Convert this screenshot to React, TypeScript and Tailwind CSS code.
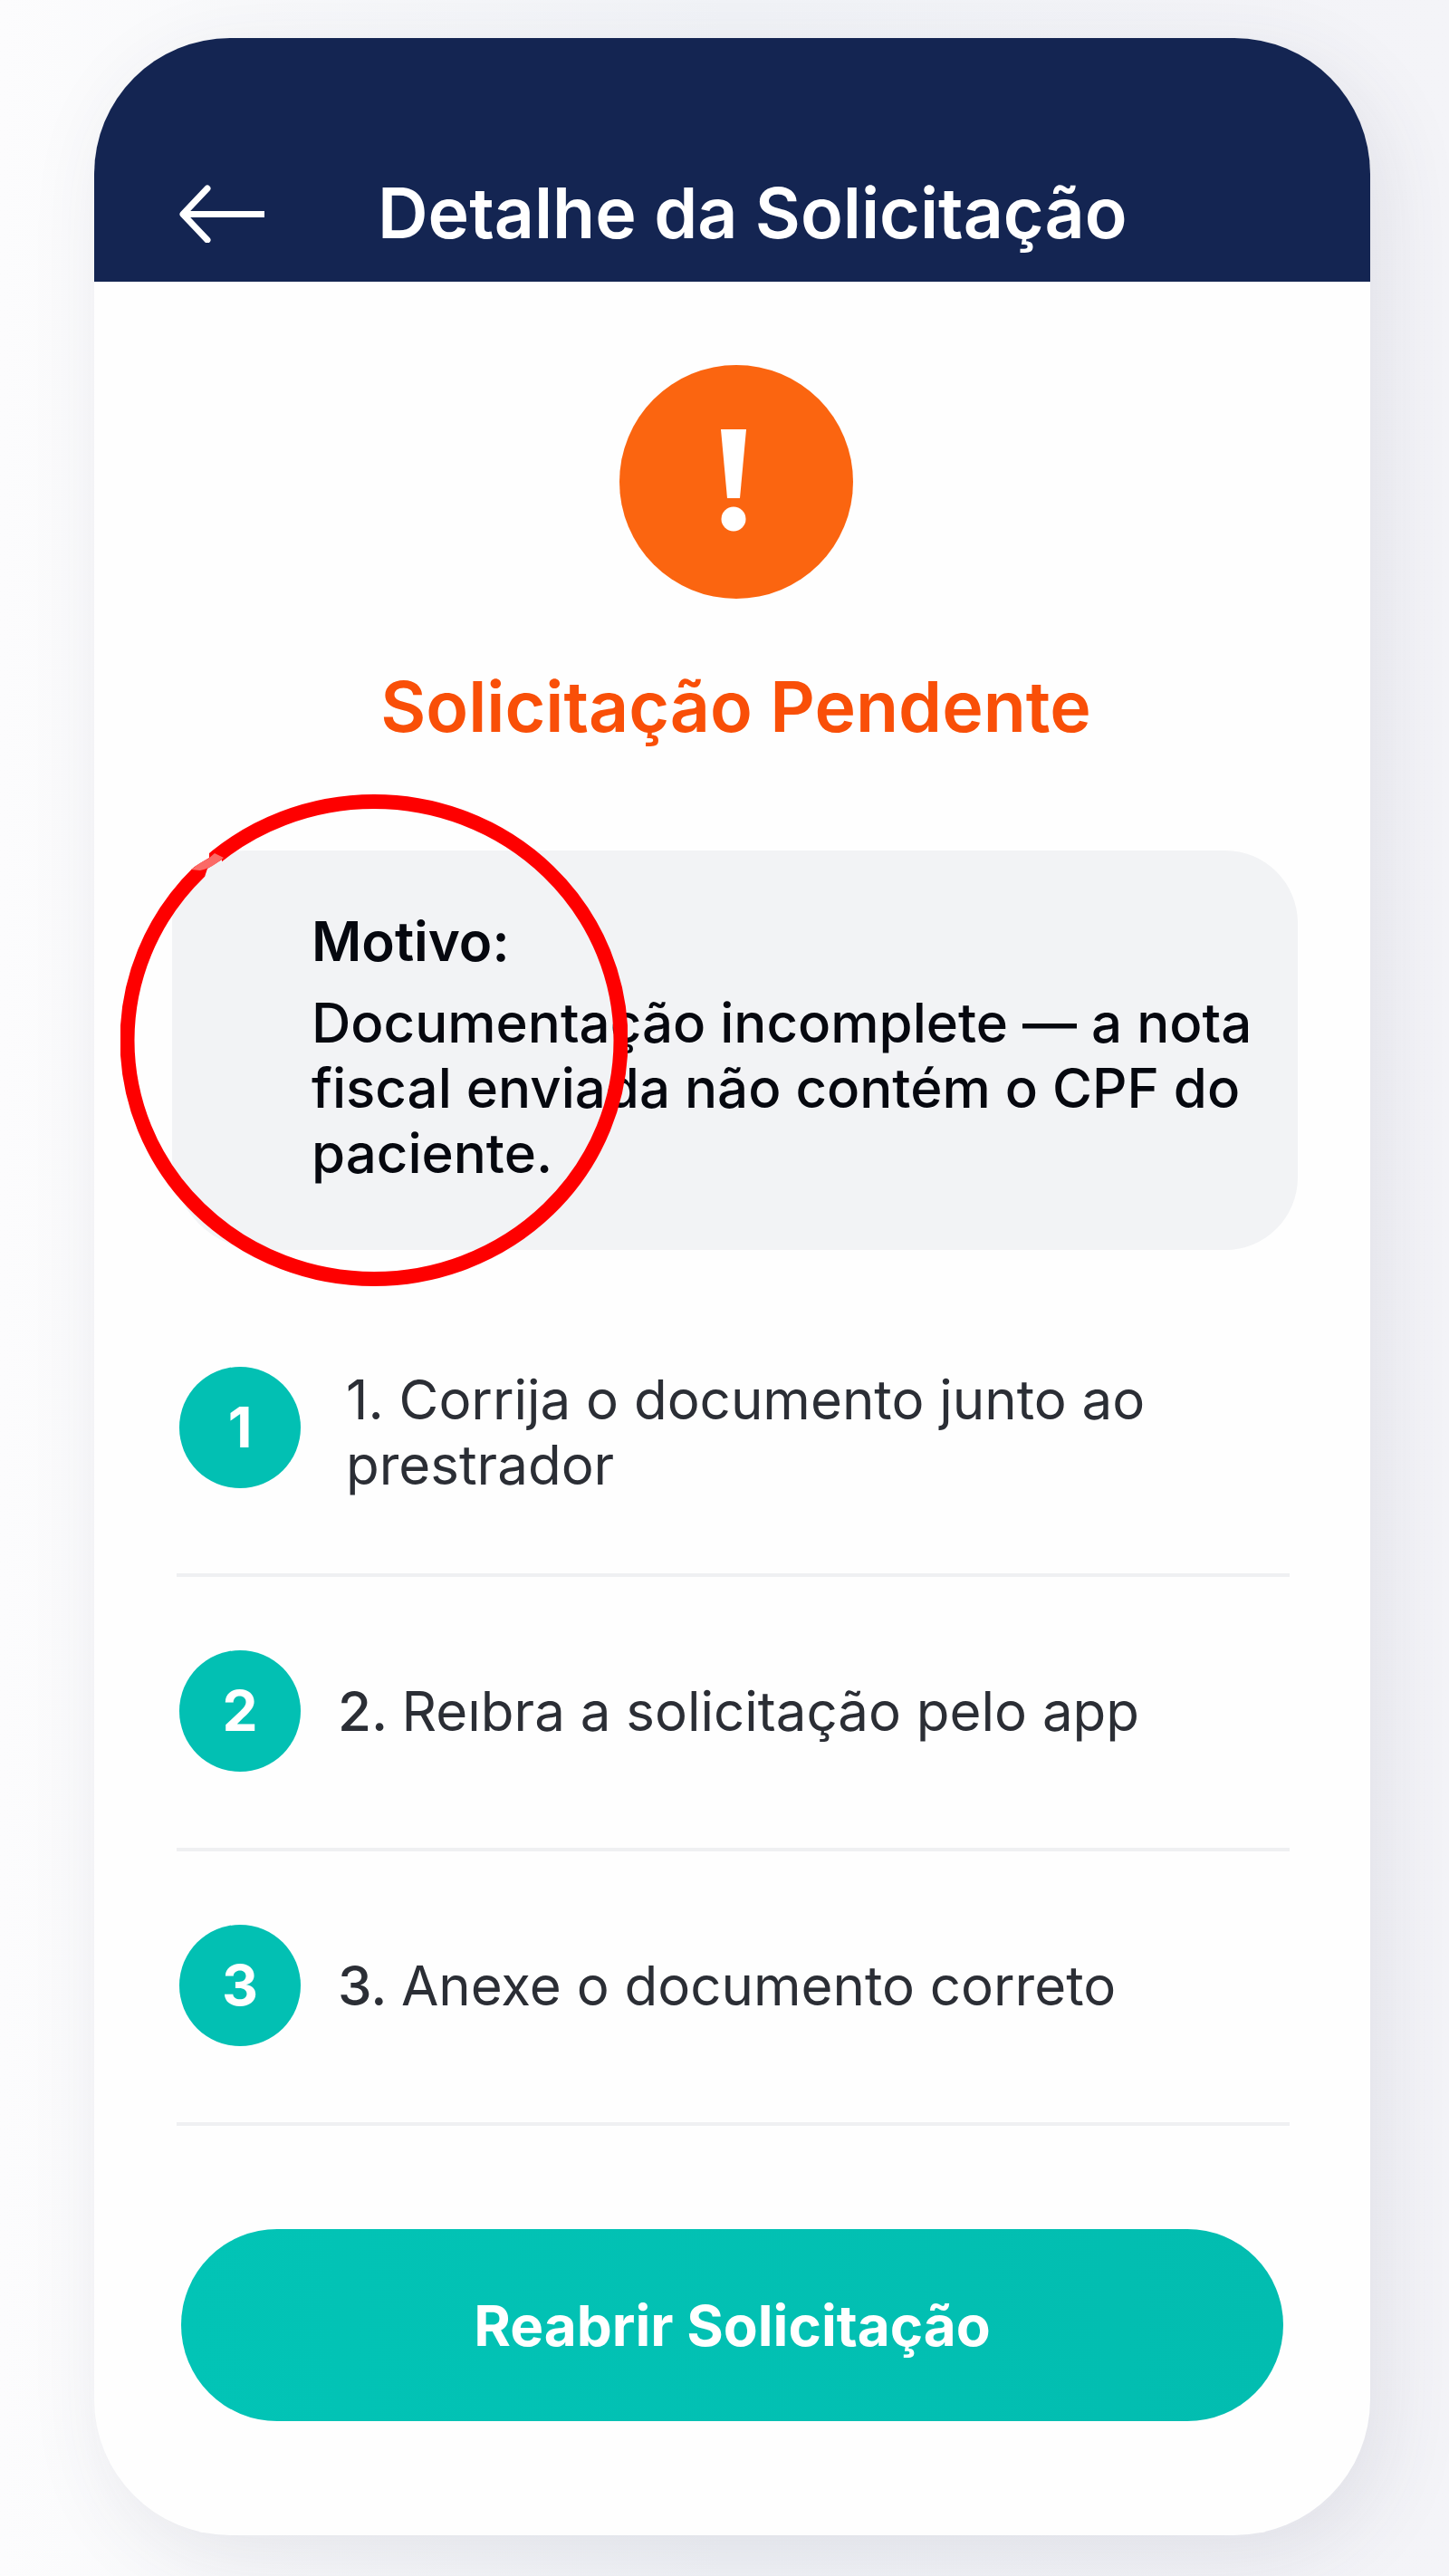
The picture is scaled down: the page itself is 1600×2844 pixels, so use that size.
import clsx from "clsx";

const steps = [
    { number: 1, text: "1. Corrija o documento junto ao prestrador", spacing: "gap-[50px]" },
    { number: 2, text: "Reıbra a solicitação pelo app", prefix: "2.", spacing: "gap-[41px]" },
    { number: 3, text: "Anexe o documento correto", prefix: "3.", spacing: "gap-[41px]" },
];

const BackArrow = () => {
    return (
        <svg viewBox="0 0 96 66" className="w-24 h-[66px]" fill="none" stroke="white" strokeWidth="7" aria-hidden="true">
            <path d="M32 6 L5 34.5 L32 63" strokeLinecap="round" strokeLinejoin="round" />
            <path d="M6 34.5 H95" />
        </svg>
    );
}

const PendingIcon = () => {
    return (
        <svg viewBox="0 0 258 258" className="w-[258px] h-[258px]" role="img" aria-label="Pendente">
            <circle cx="129" cy="129" r="129" fill="#fb6510" />
            <path d="M112 71 H140 L133 147 H119 Z" fill="white" />
            <circle cx="126" cy="170" r="13.5" fill="white" />
        </svg>
    );
}

// red pen mark over the reason box, with the faded spot where the stroke closes
const Highlight = () => {
    return (
        <svg viewBox="0 0 560 543" className="absolute -left-[57px] -top-[62px] w-[560px] h-[543px] pointer-events-none" aria-hidden="true">
            <ellipse cx="280" cy="271.5" rx="272.5" ry="263.5" fill="none" stroke="#fe0000" strokeWidth="16" />
            <path d="M77 83 L98 63 L98 70 L88 76 Z" fill="#fefefe" />
            <path d="M112 72 L96 82 L93 91 L112 77 Z" fill="#f2f3f5" />
            <path d="M78 83 Q88 75 97 71 L104 65 L114 70 L106 76 Q98 82 88 84 Z" fill="#fb6a66" />
        </svg>
    );
}

const App = () => {
    return (
        <div className="min-h-screen w-full bg-linear-to-r from-[#fcfcfd] via-[#f1f3f7] to-[#f4f4f8] pt-[42px] pb-[45px] pl-[104px] pr-[87px] font-['Inter',sans-serif]">
            <main className="w-full rounded-[150px] overflow-hidden bg-[#fefefe] pb-[126px] shadow-[16px_24px_90px_rgba(60,60,90,0.1)]">
                <header className="flex items-center gap-[124px] bg-[#142552] pt-[145px] pb-7 pl-[93px]">
                    <a href="#voltar" aria-label="Voltar"><BackArrow /></a>
                    <h1 className="text-[77px] leading-[96px] font-semibold text-white">Detalhe da Solicitação</h1>
                </header>

                <div className="flex flex-col items-center mt-[92px] pl-2">
                    <PendingIcon />
                    <h2 className="mt-[71px] text-[77px] leading-[96px] font-semibold text-[#f94f08]">Solicitação Pendente</h2>
                </div>

                <section className="relative mt-[111px] ml-[86px] mr-20 rounded-[80px] rounded-bl-[100px] bg-[#f2f3f5] pt-16 pb-[71px] pl-[154px] pr-10 text-[60px] leading-[72px] text-[#06080f]">
                    <h3 className="font-semibold">Motivo:</h3>
                    <p className="mt-[18px] font-medium">Documentação incomplete — a nota fiscal enviada não contém o CPF do paciente.</p>
                    <Highlight />
                </section>

                <ol className="mt-12 ml-[91px] mr-[89px] text-[60px] leading-[72px] text-[#2b2e35]">
                    {steps.map((step) => (
                        <li key={step.number} className={clsx("flex items-start border-b-4 border-[#eff0f2] pt-[81px] pb-[84px] pl-[3px] pr-20", step.spacing)}>
                            <span className="flex shrink-0 items-center justify-center size-[134px] rounded-full bg-[#02c0b3] text-[62px] font-bold text-white">{step.number}</span>
                            <p className="flex min-h-[134px] items-center">
                                <span>{step.prefix && <span className="font-medium">{step.prefix} </span>}{step.text}</span>
                            </p>
                        </li>
                    ))}
                </ol>

                <div className="mt-[114px] px-24">
                    <button type="button" className="w-full h-[212px] rounded-full bg-linear-to-r from-[#02c4b6] to-[#02bdb0] text-[62px] font-bold text-white">Reabrir Solicitação</button>
                </div>
            </main>
        </div>
    );
}

export default App;
